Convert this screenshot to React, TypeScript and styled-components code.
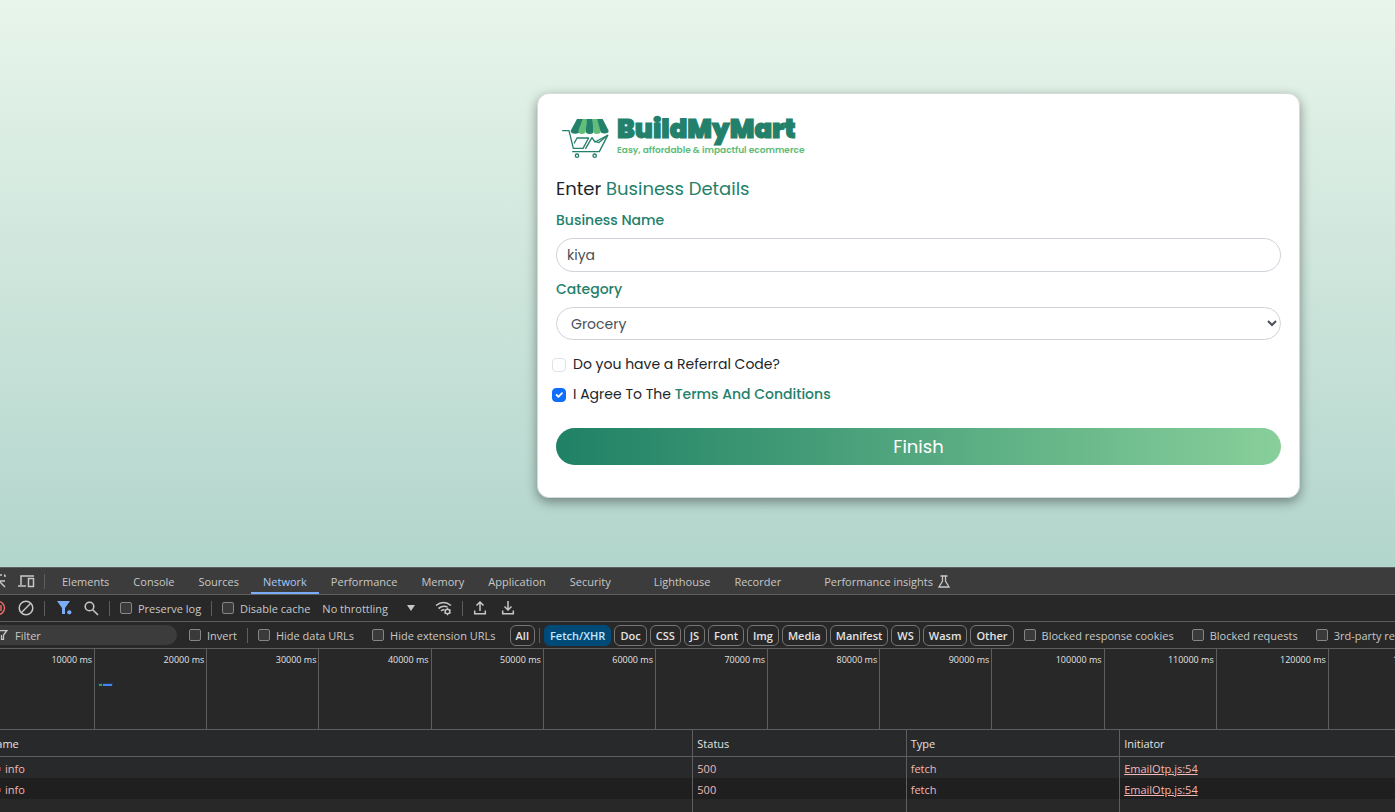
import React from "react";
import styled, { createGlobalStyle } from "styled-components";

const GlobalStyle = createGlobalStyle`
  *, *::before, *::after { box-sizing: border-box; }
  html, body { margin: 0; padding: 0; }
  body { background: #282828; overflow: hidden; }
  button, input, select { font-family: inherit; }
`;

const brand = "#23806a";
const line = "#5e5e5e";

const Page = styled.div`
  display: flex;
  flex-direction: column;
  min-height: 100vh;
  overflow: hidden;
`;

const Site = styled.main`
  display: grid;
  grid-template-columns: 537fr 763fr 95fr;
  padding: 93px 0 69px;
  background: linear-gradient(180deg, #e8f5eb 0%, #b2d5cc 100%);
  font-family: Poppins, Inter, sans-serif;
`;

const Card = styled.form`
  grid-column: 2;
  display: flex;
  flex-direction: column;
  padding: 18px 18px 32px;
  border: 1px solid #d5dcd8;
  border-radius: 12px;
  background: #fff;
  box-shadow: 0 4px 12px rgba(0, 0, 0, 0.4);
`;

const Brand = styled.div`
  display: flex;
  align-items: center;
  gap: 7px;
  height: 52px;
  padding-left: 6px;
`;

const BrandText = styled.div`
  display: flex;
  flex-direction: column;
`;

const BrandName = styled.span`
  color: ${brand};
  font-size: 26px;
  font-weight: 900;
  line-height: 24px;
  -webkit-text-stroke: 1px ${brand};
`;

const Tagline = styled.span`
  color: #5dbb75;
  font-size: 9px;
  font-weight: 600;
  line-height: 18px;
`;

const Heading = styled.h1`
  margin: 13px 0 2px;
  color: #212529;
  font-size: 18px;
  font-weight: 400;
  line-height: 24px;
  span { color: ${brand}; }
`;

const Label = styled.label`
  margin: 7px 0 8px;
  color: ${brand};
  font-size: 14px;
  font-weight: 500;
  line-height: 20px;
`;

const TextInput = styled.input`
  height: 34px;
  padding: 0 10px;
  border: 1px solid #ced4da;
  border-radius: 17px;
  background: #fff;
  color: #495057;
  font-size: 14px;
`;

const Select = styled.select`
  height: 33px;
  margin-bottom: 9px;
  padding: 0 0 0 10px;
  border: 1px solid #ced4da;
  border-radius: 17px;
  background: #fff;
  color: #495057;
  font-size: 14px;
`;

const CheckRow = styled.label`
  display: flex;
  align-items: center;
  gap: 7px;
  height: 30px;
  margin-left: -4px;
  color: #212529;
  font-size: 14px;
  a {
    color: ${brand};
    font-weight: 500;
    text-decoration: none;
  }
`;

const FormCheck = styled.input`
  appearance: none;
  width: 14px;
  height: 14px;
  margin: 1px 0 0;
  border: 1px solid #dee2e6;
  border-radius: 4px;
  background: #fff;
  &:checked {
    border-color: #0d6efd;
    background: #0d6efd url("data:image/svg+xml,%3csvg xmlns='http://www.w3.org/2000/svg' viewBox='0 0 20 20'%3e%3cpath fill='none' stroke='%23fff' stroke-linecap='round' stroke-linejoin='round' stroke-width='3' d='m6 10 3 3 6-6'/%3e%3c/svg%3e") center / 12px;
  }
`;

const Finish = styled.button`
  height: 37px;
  margin-top: 19px;
  border: 0;
  border-radius: 19px;
  background: linear-gradient(90deg, #1f8165, #88cf9a);
  color: #fff;
  font-size: 18px;
`;

const DevTools = styled.section`
  display: flex;
  flex: 1;
  flex-direction: column;
  border-top: 1px solid ${line};
  background: #282828;
  color: #c7c7c7;
  font-family: "Open Sans", sans-serif;
  font-size: 11px;
`;

const Bar = styled.div<{ $tabs?: boolean }>`
  display: flex;
  flex-shrink: 0;
  align-items: center;
  height: 27px;
  overflow: hidden;
  border-bottom: 1px solid ${line};
  background: ${(p) => (p.$tabs ? "#3c3c3c" : "#282828")};
  white-space: nowrap;
`;

const Tab = styled.button<{ $active?: boolean; $spaced?: boolean }>`
  display: flex;
  align-items: center;
  gap: 5px;
  height: 26px;
  margin-left: ${(p) => (p.$spaced ? "19px" : "0")};
  padding: 2px 12px 0;
  border: 0;
  border-bottom: 2px solid ${(p) => (p.$active ? "#7cacf8" : "transparent")};
  background: none;
  color: ${(p) => (p.$active ? "#a8c7fa" : "#c7c7c7")};
  font-size: 11px;
`;

const Divider = styled.span<{ $before?: number; $after?: number }>`
  flex-shrink: 0;
  width: 1px;
  height: 15px;
  margin: 0 ${(p) => p.$after ?? 10}px 0 ${(p) => p.$before ?? 10}px;
  background: ${line};
`;

const IconButton = styled.button<{ $before?: number; $after?: number }>`
  display: flex;
  flex-shrink: 0;
  margin: 0 ${(p) => p.$after ?? 0}px 0 ${(p) => p.$before ?? 0}px;
  padding: 0;
  border: 0;
  background: none;
  color: #c7c7c7;
`;

const Option = styled.label<{ $gap?: number }>`
  display: flex;
  flex-shrink: 0;
  align-items: center;
  gap: 6px;
  margin-right: ${(p) => p.$gap ?? 0}px;
`;

const Box = styled.input`
  appearance: none;
  width: 12px;
  height: 12px;
  margin: 0;
  border: 1px solid #858585;
  border-radius: 2px;
  background: #3a3a3a;
`;

const Throttle = styled.select`
  appearance: none;
  width: 85px;
  margin-left: 12px;
  padding: 0;
  border: 0;
  background: transparent;
  color: #c7c7c7;
  font-size: 11px;
`;

const FilterField = styled.label`
  display: flex;
  flex-shrink: 0;
  align-items: center;
  gap: 7px;
  width: 177px;
  height: 20px;
  margin-right: 12px;
  border-radius: 0 10px 10px 0;
  background: #3c3c3c;
  input {
    width: 130px;
    padding: 0;
    border: 0;
    background: transparent;
    color: #c7c7c7;
    font-size: 11px;
  }
  input::placeholder { color: #c7c7c7; }
`;

const Pills = styled.div`
  display: flex;
  flex-shrink: 0;
  gap: 3px;
  margin-right: 10px;
`;

const Pill = styled.button<{ $on?: boolean }>`
  flex-shrink: 0;
  height: 21px;
  padding: 0 5px;
  border: 1px solid ${(p) => (p.$on ? "#004a77" : "#757575")};
  border-radius: 6px;
  background: ${(p) => (p.$on ? "#004a77" : "transparent")};
  color: ${(p) => (p.$on ? "#c2e7ff" : "#e3e3e3")};
  font-size: 11px;
  font-weight: 600;
`;

const Timeline = styled.div`
  display: grid;
  flex-shrink: 0;
  grid-template-columns: 95fr repeat(11, 112fr) 66fr;
  height: 81px;
  overflow: hidden;
  border-bottom: 1px solid ${line};
`;

const Tick = styled.div<{ $last?: boolean }>`
  min-width: 0;
  overflow: hidden;
  padding: 4px ${(p) => (p.$last ? "0" : "2px")} 0 ${(p) => (p.$last ? "64px" : "0")};
  border-right: ${(p) => (p.$last ? "0" : `1px solid ${line}`)};
  color: #e3e3e3;
  font-size: 9px;
  line-height: 14px;
  text-align: ${(p) => (p.$last ? "left" : "right")};
  white-space: nowrap;
`;

const RequestMark = styled.div`
  display: flex;
  align-items: center;
  gap: 1px;
  width: 15px;
  height: 3px;
  margin: 16px 0 0 3px;
  padding: 0 1px;
  background: #263850;
  &::before { content: ""; width: 3px; height: 2px; background: #28a745; }
  &::after { content: ""; width: 9px; height: 2px; background: #4285f4; }
`;

const Requests = styled.table`
  width: 100%;
  border-collapse: separate;
  border-spacing: 0;
  table-layout: fixed;
  th, td {
    height: 21px;
    padding: 2px 4px 0;
    border-right: 1px solid ${line};
    font-weight: 400;
    line-height: 16px;
    text-align: left;
    white-space: nowrap;
  }
  th {
    height: 27px;
    border-bottom: 1px solid ${line};
    background: #28292a;
    color: #e3e3e3;
  }
  td { color: #f2b8b5; background: #28292a; }
  tr:nth-child(even) td { background: #1f1f1f; }
  a { color: #f2b8b5; }
  th:last-child, td:last-child { border-right: 0; }
`;

const Filler = styled.div`
  display: grid;
  flex: 1;
  grid-template-columns: 49.7% 15.3% 15.3% 1fr;
  div { border-right: 1px solid ${line}; }
  div:last-child { border: 0; }
`;

const CutName = styled.span`
  margin-left: -16px;
`;

const NameCell = styled.span`
  display: flex;
  align-items: center;
  gap: 4px;
  margin-left: -4px;
  &::before {
    content: "";
    width: 1px;
    height: 4px;
    background: #8c3b38;
  }
`;

const CartLogo = () => (
  <svg width="48" height="41" viewBox="96 99 144 123" fill="none" aria-hidden="true">
    <path d="M141 102h22l-14 35a12 8 0 0 1-27 0Z" fill={brand} />
    <path d="M158 102h14l-5 35a10 9 0 0 1-22 0Z" fill="#62bd79" />
    <path d="M171 102h17l3 35a11 9 0 0 1-24 0Z" fill={brand} />
    <path d="M187 102h15l10 35a10 9 0 0 1-22 0Z" fill="#62bd79" />
    <path d="M201 102h17l18 35a12 8 0 0 1-25 0Z" fill={brand} />
    <g stroke={brand} strokeWidth="4" strokeLinecap="round" strokeLinejoin="round">
      <path d="M98 137h19l13 53h29l17-31h-35l-8 15" />
      <path d="M167 190l19-32 9 13 38-20-25 49h-80" />
      <path d="m233 151-27 22-10-4" />
      <circle cx="141" cy="212" r="5" />
      <circle cx="194" cy="212" r="5" />
    </g>
  </svg>
);

const InspectIcon = () => (
  <svg width="16" height="16" viewBox="0 0 16 16" fill="none" stroke="currentColor" strokeWidth="1.5" aria-hidden="true">
    <path d="M15 14 9 8M9 13V8h6" />
    <path d="M2 2h13M2 2v12M15 2v4" strokeDasharray="2 2" />
  </svg>
);

const DeviceIcon = () => (
  <svg width="17" height="14" viewBox="0 0 17 14" fill="none" stroke="currentColor" strokeWidth="1.5" aria-hidden="true">
    <path d="M3 11V2h13M0 12h8" />
    <rect x="10.5" y="4.5" width="5" height="8" />
  </svg>
);

const RecordIcon = () => (
  <svg width="16" height="16" viewBox="0 0 16 16" fill="none" stroke="#e46962" strokeWidth="1.5" aria-hidden="true">
    <circle cx="8" cy="8" r="6.5" />
    <path d="M11 5v6" />
  </svg>
);

const ClearIcon = () => (
  <svg width="16" height="16" viewBox="0 0 16 16" fill="none" stroke="currentColor" strokeWidth="1.5" aria-hidden="true">
    <circle cx="8" cy="8" r="6.8" />
    <path d="m3.5 12.5 9-9" />
  </svg>
);

const FunnelIcon = () => (
  <svg width="16" height="14" viewBox="0 0 16 14" fill="#7cacf8" aria-hidden="true">
    <path d="M0 0h13L8 7v6H5V7Z" />
    <circle cx="12.3" cy="11.3" r="2.1" />
  </svg>
);

const SearchIcon = () => (
  <svg width="15" height="15" viewBox="0 0 15 15" fill="none" stroke="currentColor" strokeWidth="1.6" aria-hidden="true">
    <circle cx="5.5" cy="5.5" r="4.3" />
    <path d="m8.7 8.7 5.3 5.3" />
  </svg>
);

const ArrowIcon = () => (
  <svg width="8" height="6" viewBox="0 0 8 6" fill="#c7c7c7" aria-hidden="true">
    <path d="M0 0h8L4 6Z" />
  </svg>
);

const WifiIcon = () => (
  <svg width="17" height="15" viewBox="0 0 17 15" fill="none" stroke="currentColor" strokeWidth="1.6" aria-hidden="true">
    <path d="M1 4.5Q8.5-1.5 16 4.5M3.5 7.5Q8 4 12.5 6M6 10q1.500-1.300 3-1.300" />
    <circle cx="12.5" cy="10.5" r="2.3" strokeWidth="1.4" />
    <path d="M12.5 6.8v1.4M12.5 12.8v1.4M9.3 8.700l1.200.7M14.500 11.600l1.200.7M9.300 12.300l1.200-.7M14.500 9.400l1.200-.7" strokeWidth="1.2" />
  </svg>
);

const TransferIcon = ({ down }: { down?: boolean }) => (
  <svg width="14" height="14" viewBox="0 0 14 14" fill="none" stroke="currentColor" strokeWidth="1.5" aria-hidden="true">
    <path d="M1.7 9.5V12.8h10.6V9.5" />
    <path d={down ? "M7 0v9M3.5 5.5 7 9l3.5-3.5" : "M7 10V1M3.5 4.5 7 1l3.5 3.5"} />
  </svg>
);

const FlaskIcon = () => (
  <svg width="12" height="13" viewBox="0 0 12 13" fill="none" stroke="currentColor" strokeWidth="1.3" aria-hidden="true">
    <path d="M2.5 1h7M4.5 1v5L1 12h10L7.5 6V1" />
  </svg>
);

const SmallFunnel = () => (
  <svg width="8" height="10" viewBox="0 0 8 10" fill="none" stroke="#c7c7c7" strokeWidth="1.3" aria-hidden="true">
    <path d="M-3 .7H6.8L3.5 5v4.5h-2V5" />
  </svg>
);

const tabs = [
  "Elements", "Console", "Sources", "Network", "Performance", "Memory",
  "Application", "Security", "Lighthouse", "Recorder", "Performance insights",
];
const spacedTabs = ["Lighthouse", "Performance insights"];
const types = ["Fetch/XHR", "Doc", "CSS", "JS", "Font", "Img", "Media", "Manifest", "WS", "Wasm", "Other"];
const ticks = Array.from({ length: 13 }, (_, i) => (i + 1) * 10000);
const requests = [1, 2];

export default function App() {
  return (
    <Page>
      <GlobalStyle />
      <Site>
        <Card onSubmit={(e) => e.preventDefault()}>
          <Brand>
            <CartLogo />
            <BrandText>
              <BrandName>BuildMyMart</BrandName>
              <Tagline>Easy, affordable &amp; impactful ecommerce</Tagline>
            </BrandText>
          </Brand>
          <Heading>Enter <span>Business Details</span></Heading>
          <Label htmlFor="business">Business Name</Label>
          <TextInput id="business" defaultValue="kiya" />
          <Label htmlFor="category">Category</Label>
          <Select id="category" defaultValue="Grocery">
            <option>Grocery</option>
          </Select>
          <CheckRow>
            <FormCheck type="checkbox" />
            <span>Do you have a Referral Code?</span>
          </CheckRow>
          <CheckRow>
            <FormCheck type="checkbox" defaultChecked />
            <span>I Agree To The <a href="#terms">Terms And Conditions</a></span>
          </CheckRow>
          <Finish type="submit">Finish</Finish>
        </Card>
      </Site>

      <DevTools>
        <Bar $tabs>
          <IconButton $before={-10} $after={12} aria-label="Inspect"><InspectIcon /></IconButton>
          <IconButton aria-label="Device toolbar"><DeviceIcon /></IconButton>
          <Divider $before={9} $after={5} />
          {tabs.map((t) => (
            <Tab key={t} $active={t === "Network"} $spaced={spacedTabs.includes(t)}>
              {t}
              {t === "Performance insights" && <FlaskIcon />}
            </Tab>
          ))}
        </Bar>
        <Bar>
          <IconButton $before={-10} $after={12} aria-label="Record"><RecordIcon /></IconButton>
          <IconButton aria-label="Clear"><ClearIcon /></IconButton>
          <Divider $after={12} />
          <IconButton $after={11} aria-label="Filter"><FunnelIcon /></IconButton>
          <IconButton aria-label="Search"><SearchIcon /></IconButton>
          <Divider />
          <Option><Box type="checkbox" />Preserve log</Option>
          <Divider />
          <Option><Box type="checkbox" />Disable cache</Option>
          <Throttle aria-label="Throttling"><option>No throttling</option></Throttle>
          <ArrowIcon />
          <IconButton $before={20} aria-label="Network conditions"><WifiIcon /></IconButton>
          <Divider />
          <IconButton $after={14} aria-label="Import"><TransferIcon /></IconButton>
          <IconButton aria-label="Export"><TransferIcon down /></IconButton>
        </Bar>
        <Bar>
          <FilterField>
            <SmallFunnel />
            <input placeholder="Filter" aria-label="Filter" />
          </FilterField>
          <Option><Box type="checkbox" />Invert</Option>
          <Divider />
          <Option $gap={18}><Box type="checkbox" />Hide data URLs</Option>
          <Option $gap={14}><Box type="checkbox" />Hide extension URLs</Option>
          <Pill>All</Pill>
          <Divider $before={4} $after={4} />
          <Pills>
            {types.map((t) => <Pill key={t} $on={t === "Fetch/XHR"}>{t}</Pill>)}
          </Pills>
          <Option $gap={18}><Box type="checkbox" />Blocked response cookies</Option>
          <Option $gap={18}><Box type="checkbox" />Blocked requests</Option>
          <Option><Box type="checkbox" />3rd-party requests</Option>
        </Bar>
        <Timeline>
          {ticks.map((t, i) => (
            <Tick key={t} $last={i === 12}>
              {t} ms
              {i === 1 && <RequestMark />}
            </Tick>
          ))}
        </Timeline>
        <Requests>
          <colgroup>
            <col style={{ width: "49.7%" }} />
            <col style={{ width: "15.3%" }} />
            <col style={{ width: "15.3%" }} />
            <col />
          </colgroup>
          <thead>
            <tr><th><CutName>Name</CutName></th><th>Status</th><th>Type</th><th>Initiator</th></tr>
          </thead>
          <tbody>
            {requests.map((r) => (
              <tr key={r}>
                <td><NameCell>info</NameCell></td>
                <td>500</td>
                <td>fetch</td>
                <td><a href="#source">EmailOtp.js:54</a></td>
              </tr>
            ))}
          </tbody>
        </Requests>
        <Filler><div /><div /><div /><div /></Filler>
      </DevTools>
    </Page>
  );
}
